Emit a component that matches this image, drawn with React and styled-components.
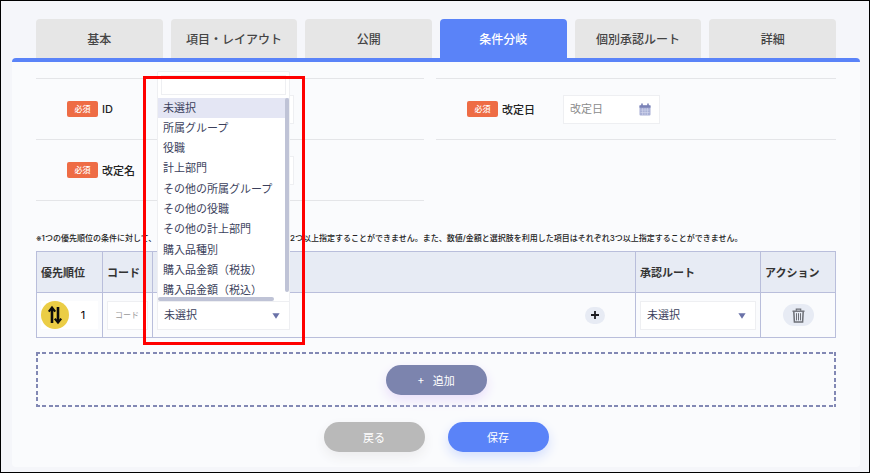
import { useState } from 'react'
import styled, { createGlobalStyle } from 'styled-components'

const tabs = ['基本', '項目・レイアウト', '公開', '条件分岐', '個別承認ルート', '詳細']

const conditions = [
  '未選択',
  '所属グループ',
  '役職',
  '計上部門',
  'その他の所属グループ',
  'その他の役職',
  'その他の計上部門',
  '購入品種別',
  '購入品金額（税抜）',
  '購入品金額（税込）',
]

const CalendarIcon = () => (
  <svg width="12" height="13" viewBox="0 0 12 13" aria-hidden="true">
    <rect x="0.5" y="2" width="11" height="10.5" rx="1" fill="#a9b0d6" />
    <path d="M0.5 2.5h11v2.2h-11z" fill="#7a82b6" />
    <path d="M3 0.5v2.5M9 0.5v2.5" stroke="#7a82b6" strokeWidth="1.6" />
    <path
      d="M1.5 7h9M1.5 9.5h9M3.6 5v7M6 5v7M8.4 5v7"
      stroke="#d5d9ee"
      strokeWidth="0.6"
    />
  </svg>
)

const SortIcon = () => (
  <svg width="28" height="28" viewBox="0 0 28 28" aria-hidden="true">
    <circle cx="14" cy="14" r="14" fill="#ebcd45" />
    <path d="M11 22V8M17 6v14" stroke="#0d0d0d" strokeWidth="2.6" fill="none" />
    <path
      d="M7.8 10.6L11 6.6l3.2 4M13.8 17.6l3.2 4 3.2-4"
      stroke="#0d0d0d"
      strokeWidth="2.2"
      fill="none"
    />
  </svg>
)

const TrashIcon = () => (
  <svg width="13" height="15" viewBox="0 0 13 15" aria-hidden="true">
    <g fill="none" stroke="#6c6f76">
      <path d="M0.5 3.2h12" strokeWidth="1.4" />
      <path d="M4.3 2.8V1.2h4.4v1.6" strokeWidth="1.2" />
      <path d="M1.8 3.5l0.6 10.6h8.2l0.6-10.6" strokeWidth="1.5" />
      <path d="M4.5 5.2v7.2M6.5 5.2v7.2M8.5 5.2v7.2" strokeWidth="1" />
    </g>
  </svg>
)

const PlusIcon = () => (
  <svg width="8" height="8" viewBox="0 0 8 8" aria-hidden="true">
    <path d="M4 0v8M0 4h8" stroke="#1c1c22" strokeWidth="1.8" />
  </svg>
)

const CaretIcon = () => (
  <Caret width="8" height="6" viewBox="0 0 8 6" aria-hidden="true">
    <path d="M0.4 0.3h7.2L4 5.8z" fill="#6a72a8" />
  </Caret>
)

const App = () => {
  const [condition, setCondition] = useState('未選択')
  return (
    <Page>
      <GlobalStyle />
      <Tabs>
        {tabs.map((tab) => (
          <Tab key={tab} type="button" $active={tab === '条件分岐'}>
            {tab}
          </Tab>
        ))}
      </Tabs>
      <Panel>
        <Fields>
          <Column>
            <Field>
              <FieldLabel htmlFor="id">
                <Required>必須</Required>ID
              </FieldLabel>
              <TextInput id="id" />
            </Field>
            <Field>
              <FieldLabel htmlFor="name">
                <Required>必須</Required>改定名
              </FieldLabel>
              <TextInput id="name" />
            </Field>
          </Column>
          <Column>
            <Field>
              <FieldLabel htmlFor="date">
                <Required>必須</Required>改定日
              </FieldLabel>
              <DateBox>
                <DateInput id="date" placeholder="改定日" />
                <CalendarIcon />
              </DateBox>
            </Field>
          </Column>
        </Fields>
        <Note>
          <NoteLead>※1つの優先順位の条件に対して、</NoteLead>
          <span>
            2つ以上指定することができません。また、数値/金額と選択肢を利用した項目はそれぞれ3つ以上指定することができません。
          </span>
        </Note>
        <Table>
          <thead>
            <tr>
              <Th $width="66px">優先順位</Th>
              <Th $width="50px">コード</Th>
              <Th aria-label="条件" />
              <Th $width="125px">承認ルート</Th>
              <Th $width="75px">アクション</Th>
            </tr>
          </thead>
          <tbody>
            <tr>
              <Td>
                <Priority>
                  <SortIcon />
                  <PriorityInput aria-label="優先順位" defaultValue="1" />
                </Priority>
              </Td>
              <Td>
                <CodeInput aria-label="コード" placeholder="コード" />
              </Td>
              <Td>
                <ConditionRow>
                  <ConditionBox>
                    <Select
                      aria-label="条件"
                      value={condition}
                      onChange={(e) => setCondition(e.target.value)}
                    >
                      {conditions.map((item) => (
                        <option key={item}>{item}</option>
                      ))}
                    </Select>
                    <CaretIcon />
                    <Menu>
                      <Search aria-label="検索" />
                      <Options role="listbox" aria-label="条件">
                        {conditions.map((item) => (
                          <Option
                            key={item}
                            role="option"
                            aria-selected={item === condition}
                            onClick={() => setCondition(item)}
                          >
                            {item}
                          </Option>
                        ))}
                      </Options>
                      <ScrollY />
                      <ScrollX />
                    </Menu>
                    <Highlight />
                  </ConditionBox>
                  <PlusButton type="button" aria-label="条件を追加">
                    <PlusIcon />
                  </PlusButton>
                </ConditionRow>
              </Td>
              <Td>
                <SelectBox>
                  <Select aria-label="承認ルート">
                    <option>未選択</option>
                  </Select>
                  <CaretIcon />
                </SelectBox>
              </Td>
              <Td>
                <DeleteButton type="button" aria-label="削除">
                  <TrashIcon />
                </DeleteButton>
              </Td>
            </tr>
          </tbody>
        </Table>
        <AddArea>
          <Button type="button" $color="#7c84ae" $shadow="#e9defa">
            <span>+</span>追加
          </Button>
        </AddArea>
        <Footer>
          <Button type="button" $color="#b9b9b9" $shadow="#ececee">
            戻る
          </Button>
          <Button type="button" $color="#5a83f8" $shadow="#d3defd">
            保存
          </Button>
        </Footer>
      </Panel>
    </Page>
  )
}

export default App

const GlobalStyle = createGlobalStyle`
  * {
    box-sizing: border-box;
  }
  body {
    margin: 0;
    color: #222;
    font-size: 11px;
  }
  body, button, input, select {
    font-family: Inter, "Noto Sans CJK JP", sans-serif;
  }
`
const Page = styled.div`
  min-height: 100vh;
  padding: 18px 9px 5px 11px;
  border: 1px solid #000;
  background-color: #f5f6fa;
`
const Tabs = styled.nav`
  display: flex;
  gap: 8px;
  padding: 0 24px;
`
const Tab = styled.button`
  flex: 1 1 0;
  height: 39px;
  padding: 0;
  border: 0;
  border-radius: 4px 4px 0 0;
  font-size: 12px;
  font-weight: 500;
  white-space: nowrap;
  cursor: pointer;
  color: ${(props) => (props.$active ? '#fff' : '#444')};
  background-color: ${(props) => (props.$active ? '#5a83f8' : '#e6e6e6')};
`
const Panel = styled.main`
  padding: 16px 24px 15px;
  border-top: 4px solid #5a83f8;
  border-radius: 4px;
  background-color: #fafbfd;
`
const Fields = styled.div`
  display: grid;
  grid-template-columns: 388fr 400fr;
  align-items: start;
  gap: 12px;
`
const Column = styled.div`
  border-top: 1px solid #e4e5e8;
`
const Field = styled.div`
  display: flex;
  align-items: center;
  height: 61px;
  padding-left: 31px;
  border-bottom: 1px solid #e4e5e8;
`
const FieldLabel = styled.label`
  display: flex;
  align-items: center;
  gap: 4px;
  width: 96px;
  font-weight: 500;
`
const Required = styled.span`
  width: 31px;
  border-radius: 2px;
  font-size: 8px;
  line-height: 16px;
  text-align: center;
  color: #fff;
  background-color: #ee6c45;
`
const TextInput = styled.input`
  width: 131px;
  height: 29px;
  border: 1px solid #eeeff2;
  background-color: #fff;
`
const DateBox = styled.div`
  display: flex;
  align-items: center;
  width: 97px;
  height: 29px;
  padding: 0 8px 0 6px;
  border: 1px solid #eeeff2;
  background-color: #fff;
`
const DateInput = styled.input`
  flex: 1;
  min-width: 0;
  padding: 0;
  border: 0;
  outline: 0;
  font-size: 11px;
  &::placeholder {
    color: #8c8c8c;
  }
`
const Note = styled.p`
  display: flex;
  margin: 31px 0 7px;
  font-size: 8px;
  font-weight: 500;
  line-height: 12px;
  white-space: nowrap;
`
const NoteLead = styled.span`
  width: 254px;
`
const Table = styled.table`
  width: 100%;
  table-layout: fixed;
  border-collapse: collapse;
`
const Th = styled.th`
  width: ${(props) => props.$width || 'auto'};
  height: 41px;
  padding: 0 4px;
  border: 1px solid #b9bedb;
  text-align: left;
  white-space: nowrap;
  color: #333;
  background-color: #e7ebf4;
`
const Td = styled.td`
  height: 45px;
  padding: 0 4px;
  border: 1px solid #b9bedb;
`
const Priority = styled.div`
  display: flex;
  background-color: #fff;
`
const PriorityInput = styled.input`
  width: 28px;
  padding: 0;
  border: 0;
  text-align: center;
  font-size: 11px;
  background: none;
`
const CodeInput = styled.input`
  display: block;
  width: 100%;
  height: 29px;
  padding: 0 7px;
  border: 1px solid #eeeff2;
  font-size: 8px;
  background-color: #fff;
  &::placeholder {
    color: #999;
  }
`
const ConditionRow = styled.div`
  display: flex;
  align-items: center;
  justify-content: space-between;
  padding-right: 26px;
`
const SelectBox = styled.div`
  position: relative;
`
const ConditionBox = styled(SelectBox)`
  width: 133px;
`
const Select = styled.select`
  display: block;
  appearance: none;
  width: 100%;
  height: 29px;
  padding: 0 6px;
  border: 1px solid #eeeff2;
  border-radius: 0;
  font-size: 11px;
  color: #3b3f5c;
  background-color: #fff;
`
const Caret = styled.svg`
  position: absolute;
  top: 12px;
  right: 10px;
  pointer-events: none;
`
const Menu = styled.div`
  position: absolute;
  bottom: 100%;
  left: 0;
  width: 100%;
  padding-top: 3px;
  border: 1px solid #eeeff2;
  border-bottom: 0;
  border-radius: 2px 2px 0 0;
  background-color: #fff;
`
const Search = styled.input`
  display: block;
  width: 125px;
  height: 20px;
  margin: 0 3px 3px;
  border: 1px solid #eeeff2;
`
const Options = styled.ul`
  display: grid;
  grid-auto-rows: 1fr;
  height: 203px;
  margin: 0;
  padding: 0;
  list-style: none;
`
const Option = styled.li`
  padding-left: 5px;
  line-height: 20px;
  white-space: nowrap;
  cursor: pointer;
  color: #3b3f5c;
  background-color: ${(props) => (props['aria-selected'] ? '#e4e6f4' : '#fff')};
`
const ScrollBar = styled.span`
  position: absolute;
  border-radius: 2px;
  background-color: #bfc3d6;
`
const ScrollY = styled(ScrollBar)`
  right: 0;
  bottom: 9px;
  width: 4px;
  height: 194px;
`
const ScrollX = styled(ScrollBar)`
  left: 0;
  bottom: 0;
  width: 116px;
  height: 4px;
`
// red frame round the open drop-down
const Highlight = styled.div`
  position: absolute;
  top: -225px;
  right: -15px;
  bottom: -15px;
  left: -14px;
  border: 3px solid #f00;
  pointer-events: none;
`
const PlusButton = styled.button`
  display: flex;
  align-items: center;
  justify-content: center;
  width: 20px;
  height: 17px;
  padding: 0;
  border: 0;
  border-radius: 9px;
  cursor: pointer;
  background-color: #e7ebf4;
`
const DeleteButton = styled(PlusButton)`
  width: 31px;
  height: 22px;
  margin: 0 auto;
  border-radius: 11px;
`
const AddArea = styled.div`
  --dash: #8288b4 0 4px, transparent 4px 6px, #8288b4 6px 10px, transparent 10px 13px;
  display: flex;
  justify-content: center;
  margin-top: 14px;
  padding: 13px 0 12px;
  background-image: repeating-linear-gradient(to right, var(--dash)),
    repeating-linear-gradient(to right, var(--dash)),
    repeating-linear-gradient(to bottom, var(--dash)),
    repeating-linear-gradient(to bottom, var(--dash));
  background-position: top, bottom, left, right;
  background-repeat: no-repeat;
  background-size: 100% 2px, 100% 2px, 2px 100%, 2px 100%;
`
const Footer = styled.div`
  display: flex;
  justify-content: center;
  gap: 23px;
  margin-top: 15px;
`
const Button = styled.button`
  display: flex;
  align-items: center;
  justify-content: center;
  gap: 8px;
  width: 101px;
  height: 30px;
  padding: 0;
  border: 0;
  border-radius: 15px;
  font-size: 11px;
  cursor: pointer;
  color: #fff;
  background-color: ${(props) => props.$color};
  box-shadow: 0 5px 12px ${(props) => props.$shadow};
`
